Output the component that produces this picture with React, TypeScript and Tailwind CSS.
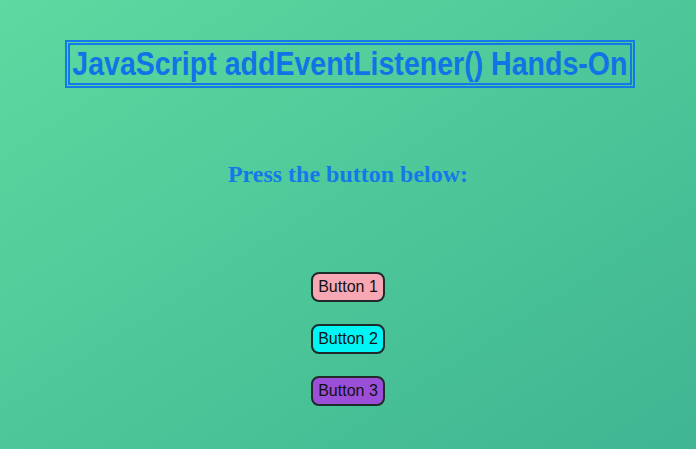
export default function App() {
  const buttons = [
    { label: 'Button 1', cls: 'bg-[#f7a8b4]' },
    { label: 'Button 2', cls: 'bg-[#00f5f5]' },
    { label: 'Button 3', cls: 'bg-[#9b4fd9]' },
  ];

  return (
    <div className="w-[696px] h-[449px] bg-gradient-to-br from-[#5cdaa0] to-[#3fb592] flex flex-col items-center">
      {/* Title */}
      <div className="mt-[40px] ml-[3px] w-[570px] border-[5px] border-double border-[#1479e8] flex justify-center">
        <h1
          className="text-[#1074e6] text-[33px] font-bold leading-[38px] whitespace-nowrap scale-x-[0.865] origin-center"
          style={{ fontFamily: '"Liberation Sans", Arial, sans-serif' }}
        >
          JavaScript addEventListener() Hands-On
        </h1>
      </div>

      <h2
        className="mt-[73px] text-[#1479e8] text-[24px] leading-[27px] font-bold"
        style={{ fontFamily: '"Liberation Serif", serif' }}
      >
        Press the button below:
      </h2>

      {/* Buttons */}
      <div className="mt-[84px] flex flex-col items-center gap-[22px]">
        {buttons.map((b) => (
          <button
            key={b.label}
            className={`${b.cls} w-[74px] h-[30px] border-2 border-[#1f2a2a] rounded-[8px] text-[16px] text-[#111]`}
            style={{ fontFamily: '"Liberation Sans", Arial, sans-serif' }}
          >
            {b.label}
          </button>
        ))}
      </div>
    </div>
  );
}
